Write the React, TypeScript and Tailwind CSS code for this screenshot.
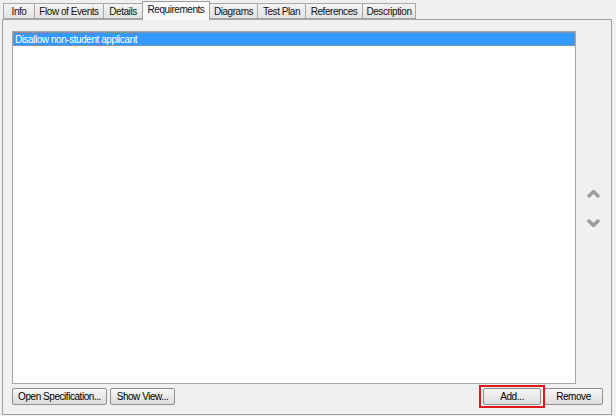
const tabs = [
  { label: "Info", w: "w-[32px]" },
  { label: "Flow of Events", w: "w-[70px]" },
  { label: "Details", w: "w-[40px]" },
  { label: "Requirements", w: "w-[68px]" },
  { label: "Diagrams", w: "w-[49px]" },
  { label: "Test Plan", w: "w-[49px]" },
  { label: "References", w: "w-[58px]" },
  { label: "Description", w: "w-[54px]" },
];
const active = "Requirements";

function Tab({ label, w }: { label: string; w: string }) {
  if (label === active) {
    return (
      <div
        className={
          "relative z-10 -mr-px -mb-px flex h-[19px] items-center justify-center border border-b-0 border-[#9c9c9c] bg-[#f9f9f9] pb-[3px] " +
          w
        }
      >
        {label}
      </div>
    );
  }
  return (
    <div
      className={
        "-mr-px flex h-[16px] items-center justify-center border border-[#a7a7a7] bg-gradient-to-b from-[#f4f4f4] to-[#e2e2e2] " +
        w
      }
    >
      {label}
    </div>
  );
}

function Button({ children, className = "" }: { children: React.ReactNode; className?: string }) {
  return (
    <button
      className={
        "flex h-[17px] items-center justify-center whitespace-nowrap rounded-[2px] border border-[#8e8f8f] bg-gradient-to-b from-[#f6f6f6] to-[#dddddd] text-black " +
        className
      }
    >
      {children}
    </button>
  );
}

export default function App() {
  return (
    <div
      className="relative h-[416px] w-[616px] overflow-hidden bg-[#f0f0f0] text-[10px] tracking-[-0.45px] text-[#111]"
      style={{ fontFamily: "'Liberation Sans', Arial, sans-serif" }}
    >
      <div className="flex items-end pl-[3px] pt-[1px]">
        {tabs.map((t) => (
          <Tab key={t.label} label={t.label} w={t.w} />
        ))}
      </div>

      <div className="ml-[2px] flex h-[396px] w-[610px] flex-col border border-[#a0a0a0] bg-[#f0f0f0]">
        <div className="flex flex-1 pl-[9px] pt-[11px]">
          <div className="h-[353px] w-[564px] border border-[#a5a5a5] bg-white">
            <div className="flex h-[14px] items-center border border-dotted border-[#b99070] bg-[#3399ff] pl-px text-white">
              Disallow non-student applicant
            </div>
          </div>
          <div className="flex flex-1 flex-col items-center justify-center gap-[21px]">
            <svg width="13" height="9" viewBox="0 0 13 9">
              <path d="M2 7 L6.5 2.5 L11 7" fill="none" stroke="#9c9c9c" strokeWidth="3.4" strokeLinejoin="round" strokeLinecap="round" />
            </svg>
            <svg width="13" height="9" viewBox="0 0 13 9">
              <path d="M2 2 L6.5 6.5 L11 2" fill="none" stroke="#9c9c9c" strokeWidth="3.4" strokeLinejoin="round" strokeLinecap="round" />
            </svg>
          </div>
        </div>

        <div className="flex items-center pb-[9px] pl-[9px] pr-[8px] pt-[3px]">
          <Button className="w-[95px]">Open Specification...</Button>
          <Button className="ml-[3px] w-[65px]">Show View...</Button>
          <div className="relative ml-auto">
            <Button className="w-[58px]">Add...</Button>
            <div className="pointer-events-none absolute -inset-x-[4px] -inset-y-[3px] border-2 border-[#e0181c]" />
          </div>
          <Button className="ml-[3px] w-[59px]">Remove</Button>
        </div>
      </div>
    </div>
  );
}
